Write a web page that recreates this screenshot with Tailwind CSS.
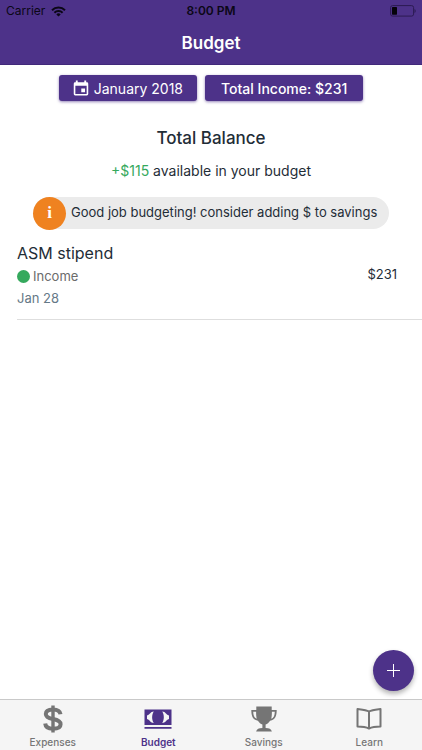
<!DOCTYPE html>
<html lang="en">
<head>
<meta charset="utf-8">
<meta name="viewport" content="width=device-width, initial-scale=1">
<title>Budget</title>
<script src="https://cdn.jsdelivr.net/npm/@tailwindcss/browser@4"></script>
</head>
<body class="flex min-h-screen flex-col bg-white font-['Inter','Liberation_Sans',sans-serif] text-[#1f2d37]">
  <header class="border-b border-[#41297a] bg-[#4d3289]">
    <div class="grid grid-cols-3 items-center px-[6px] pt-[3px] text-[12px] leading-[16px] text-[#0b0716]">
      <div class="flex items-center gap-[6px]">
        <span>Carrier</span>
        <svg class="h-[11px] w-[15px]" viewBox="0 0 15 11" fill="none" stroke="currentColor" stroke-width="2" aria-label="Wi-Fi"><path d="M1 4.2a9.3 9.3 0 0 1 13 0M3.4 6.7a5.9 5.9 0 0 1 8.2 0"/><path d="M7.5 10.6 5.3 8.4a3.2 3.2 0 0 1 4.4 0z" fill="currentColor" stroke="none"/></svg>
      </div>
      <span class="text-center font-semibold">8:00 PM</span>
      <svg class="h-[12px] w-[27px] justify-self-end" viewBox="0 0 27 12" aria-label="Battery low"><rect x="1.6" y=".6" width="23" height="10.5" rx="2" fill="none" stroke="#2c1b52" stroke-width="1"/><rect x="3" y="2" width="5" height="7.7" rx=".6" fill="#05030a"/><path d="M25.500 4v4q1.200-.7 1.200-2t-1.200-2" fill="#2c1b52"/></svg>
    </div>
    <h1 class="pt-[12px] pb-[9px] text-center text-[17px] leading-[24px] font-semibold text-white">Budget</h1>
  </header>

  <main class="flex-1">
    <div class="flex justify-center gap-2 pt-[10px]">
      <button class="flex h-[26px] items-center gap-[5px] rounded-[3px] bg-[#4d3289] px-[14px] text-[14px] text-white shadow-[0_1px_3px_rgba(77,50,137,0.6)]">
        <svg class="size-[16px]" viewBox="0 0 17 17" aria-hidden="true"><path fill="currentColor" fill-rule="evenodd" d="M3 .5h2v2h7v-2h2v2h.7q1.500 0 1.500 1.500v11q0 1.500-1.500 1.500H2.300Q.8 16.500.8 15V4q0-1.500 1.500-1.500H3zM2.500 6v8.800h12V6zM8.800 9h4v4h-4z"/></svg>
        January 2018
      </button>
      <button class="h-[26px] rounded-[3px] bg-[#4d3289] px-[16px] text-[14px] font-medium text-white shadow-[0_1px_3px_rgba(77,50,137,0.6)]">Total Income: $231</button>
    </div>

    <h2 class="mt-[25px] text-center text-[17px] leading-[24px] font-medium">Total Balance</h2>
    <p class="mt-[11px] text-center text-[14px] leading-[20px]"><span class="text-[#35a95d]">+$115</span> available in your budget</p>

    <div class="mx-[33px] mt-[16px] flex h-[32px] items-center gap-[5px] rounded-full bg-[#ebebeb]">
      <span class="flex size-[33px] shrink-0 items-center justify-center rounded-full bg-[#ef8220] font-['Liberation_Serif',serif] text-[17px] font-bold text-white">i</span>
      <span class="text-[13px] whitespace-nowrap">Good job budgeting! consider adding $ to savings</span>
    </div>

    <ul class="mt-[12px] pl-[17px]">
      <li class="flex items-center justify-between border-b border-[#dedede] pr-[25px] pb-[10px]">
        <div>
          <h3 class="text-[16px] leading-[24px]">ASM stipend</h3>
          <p class="flex items-center gap-[3px] text-[13px] leading-[22px] text-[#6b6b6b]"><span class="size-[13px] rounded-full bg-[#35a95d]"></span>Income</p>
          <p class="text-[13px] leading-[22px] text-[#657987]">Jan 28</p>
        </div>
        <span class="text-[13px]">$231</span>
      </li>
    </ul>
  </main>

  <div class="sticky bottom-[51px] flex justify-end pr-[8px] pb-[8px]">
    <button aria-label="Add entry" class="flex size-[41px] items-center justify-center rounded-full bg-[#4d3289] text-white shadow-[0_3px_5px_rgba(0,0,0,0.3)]">
      <svg class="size-[13px]" viewBox="0 0 13 13" fill="none" stroke="currentColor" aria-hidden="true"><path d="M6.500 0v13M0 6.500h13"/></svg>
    </button>
  </div>

  <nav class="sticky bottom-0 grid h-[51px] grid-cols-4 border-t border-[#c9c9c9] bg-[#f5f5f5] text-[10px] leading-[14px] font-medium text-[#757575]">
    <a href="#expenses" class="flex flex-col items-center gap-[2px] pt-[5px]">
      <svg class="size-[28px]" viewBox="0 0 28 28" fill="none" stroke="currentColor" aria-hidden="true"><path stroke-width="4" d="M21.500 9.300C21 6 18.200 4.500 14 4.500S6.800 6.100 6.800 9c0 3.300 3 4.200 7.200 5s7.600 1.900 7.600 5.200c0 3-3.200 4.500-7.600 4.500s-7.500-1.700-7.800-5.200"/><path stroke-width="3.400" d="M14 .5v27"/></svg>
      <span>Expenses</span>
    </a>
    <a href="#budget" aria-current="page" class="flex flex-col items-center gap-[2px] pt-[5px] font-semibold text-[#4d3289]">
      <svg class="size-[28px]" viewBox="0 0 28 28" aria-hidden="true"><path fill="currentColor" d="M.5 4.500h27v15.500H.5zM.5 22h27v1.800H.5z"/><path fill="#f5f5f5" d="M9.800 6.500C6.300 6.500 6.300 9.500 3 10.500v3.500c3.300 1 3.300 4 6.800 4-2.200-3.300-2.200-8.200 0-11.500M18.200 6.500c3.500 0 3.500 3 6.800 4V14c-3.300 1-3.300 4-6.800 4 2.200-3.300 2.200-8.200 0-11.500"/></svg>
      <span>Budget</span>
    </a>
    <a href="#savings" class="flex flex-col items-center gap-[2px] pt-[5px]">
      <svg class="size-[28px]" viewBox="0 0 28 28" aria-hidden="true"><path fill="currentColor" fill-rule="evenodd" d="M6.300 1.500h15.400v3.500h5c0 6-1.400 9.800-6.600 10.700-1.300 2-2.800 3.300-4.500 3.900V23c3.600.2 5.700.9 6.300 3.500H6.100c.6-2.600 2.700-3.300 6.300-3.500v-3.400c-1.700-.6-3.200-1.900-4.500-3.900C2.700 14.800 1.300 11 1.300 5h5zM3.200 6.700c.2 4 1.100 6.200 3.600 7-.6-2-.7-4.500-.7-7zM24.800 6.700h-2.900c0 2.500-.1 5-.7 7 2.500-.8 3.400-3 3.600-7z"/></svg>
      <span>Savings</span>
    </a>
    <a href="#learn" class="flex flex-col items-center gap-[2px] pt-[5px]">
      <svg class="size-[28px]" viewBox="0 0 28 28" fill="none" stroke="currentColor" stroke-width="2" stroke-linejoin="round" aria-hidden="true"><path d="M14 6.500c-3-1.800-7-2-11.500-2.500v17.500c4.500 0 8.500.5 11.500 2 3-1.500 7-2 11.500-2V4c-4.500.5-8.500.7-11.500 2.500zM14 6.500V23"/></svg>
      <span>Learn</span>
    </a>
  </nav>
</body>
</html>
